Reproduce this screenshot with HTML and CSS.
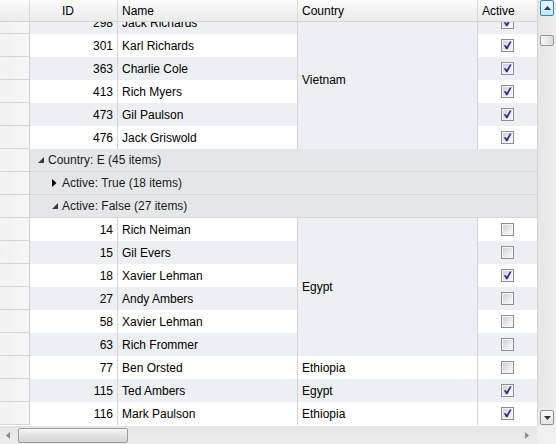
FILE: index.html
```html
<!DOCTYPE html>
<html lang="en">
<head>
  <meta charset="UTF-8" />
  <title>Grouped grid</title>
  <link rel="stylesheet" href="styles.css">
</head>
<body>

  <div class="grid-view">
    <div class="view">
      <div class="head">
        <div class="hcell"></div>
        <div class="hcell h-id">ID</div>
        <div class="hcell">Name</div>
        <div class="hcell">Country</div>
        <div class="hcell">Active</div>
      </div>
      <div class="body">
        <div class="rows" id="rows"></div>
      </div>
    </div>

    <div class="vscroll">
      <div class="sbtn up">
        <svg width="7" height="4" viewBox="0 0 7 4"><path d="M0 4L3.5 0L7 4Z" fill="#2d4255"/></svg>
      </div>
      <div class="vthumb"></div>
      <div class="sbtn down">
        <svg width="7" height="4" viewBox="0 0 7 4"><path d="M0 0L3.5 4L7 0Z" fill="#333"/></svg>
      </div>
    </div>

    <div class="hscroll">
      <svg width="4" height="7" viewBox="0 0 4 7"><path d="M4 0L0 3.5L4 7Z" fill="#8a8a8a"/></svg>
      <div class="hthumb"></div>
      <svg class="right" width="4" height="7" viewBox="0 0 4 7"><path d="M0 0L4 3.5L0 7Z" fill="#8a8a8a"/></svg>
    </div>
    <div class="corner"></div>
  </div>

  <script>
    // rows shown in the grid, top to bottom
    const items = [
      { id: 298, name: 'Jack Richards', country: 'Vietnam', span: 6, active: true, alt: true },
      { id: 301, name: 'Karl Richards', active: true },
      { id: 363, name: 'Charlie Cole', active: true, alt: true },
      { id: 413, name: 'Rich Myers', active: true },
      { id: 473, name: 'Gil Paulson', active: true, alt: true },
      { id: 476, name: 'Jack Griswold', active: true },
      { group: 'Country: E (45 items)', level: 1, open: true },
      { group: 'Active: True (18 items)', level: 2, open: false },
      { group: 'Active: False (27 items)', level: 2, open: true },
      { id: 14, name: 'Rich Neiman', country: 'Egypt', span: 6, active: false },
      { id: 15, name: 'Gil Evers', active: false, alt: true },
      { id: 18, name: 'Xavier Lehman', active: true },
      { id: 27, name: 'Andy Ambers', active: false, alt: true },
      { id: 58, name: 'Xavier Lehman', active: false },
      { id: 63, name: 'Rich Frommer', active: false, alt: true },
      { id: 77, name: 'Ben Orsted', country: 'Ethiopia', active: false },
      { id: 115, name: 'Ted Ambers', country: 'Egypt', active: true, alt: true },
      { id: 116, name: 'Mark Paulson', country: 'Ethiopia', active: true }
    ];

    const openGlyph = '<svg width="6" height="6" viewBox="0 0 6 6"><path d="M6 0V6H0Z" fill="#3c3c3c"/></svg>';
    const closedGlyph = '<svg width="5" height="8" viewBox="0 0 5 8"><path d="M0 0L4.5 4L0 8Z" fill="#000"/></svg>';
    const tick = '<svg width="9" height="9" viewBox="0 0 9 9"><path d="M0.8 4.2H2.8L3.8 5.6L6.9 0.4H8.6L4.5 8.2H3.1Z" fill="#2f3191"/></svg>';

    document.getElementById('rows').innerHTML = items.map(item => {
      if (item.group) {
        return `
          <div class="row">
            <div class="lead"></div>
            <div class="group lvl${item.level}">
              <span class="glyph">${item.open ? openGlyph : closedGlyph}</span>${item.group}
            </div>
          </div>`;
      }
      let country = '';
      if (item.span) {
        country = `<div class="cell country merged" style="grid-row: span ${item.span}">${item.country}</div>`;
      } else if (item.country) {
        country = `<div class="cell country">${item.country}</div>`;
      }
      return `
        <div class="row${item.alt ? ' alt' : ''}">
          <div class="lead"></div>
          <div class="cell id">${item.id}</div>
          <div class="cell name">${item.name}</div>
          ${country}
          <div class="cell active"><span class="check">${item.active ? tick : ''}</span></div>
        </div>`;
    }).join('');
  </script>
</body>
</html>
```

FILE: styles.css
```css
html, body {
  margin: 0;
  padding: 0;
  overflow: hidden;
}
body {
  font-family: 'Liberation Sans', Arial, sans-serif;
  font-size: 12px;
  color: #000;
  background-color: #fff;
}
.grid-view {
  display: grid;
  grid-template-columns: 537px 19px;
  grid-template-rows: 426px 18px;
  width: 556px;
  height: 444px;
}
.view {
  display: flex;
  flex-direction: column;
  min-height: 0;
}
.head, .rows {
  display: grid;
  grid-template-columns: 30px 88px 180px 180px 59px;
}
.head {
  height: 22px;
  border-bottom: 1px solid #d5d5d5;
  box-sizing: border-box;
  background: linear-gradient(#fcfcfc, #f1f1f1 60%, #ebebeb);
}
.hcell {
  padding: 1px 0 0 4px;
  line-height: 20px;
  border-right: 1px solid #dcdcdc;
}
.hcell:last-child {
  border-right: none;
}
.h-id {
  padding-left: 32px;
}
.body {
  flex: 1;
  overflow: hidden;
  background-color: #fff;
}
.rows {
  grid-auto-rows: 23px;
  margin-top: -11px;
}
.row {
  display: contents;
}
.lead {
  grid-column: 1;
  box-sizing: border-box;
  border-right: 1px solid #cfcfcf;
  border-bottom: 1px solid #d6d6d6;
  background: linear-gradient(to right, #f1f1f1, #f7f7f7);
}
.cell {
  display: flex;
  align-items: center;
  box-sizing: border-box;
  border-right: 1px solid #d4d4d4;
  white-space: nowrap;
}
.row.alt .cell, .merged {
  background-color: #eceff3;
}
.id {
  grid-column: 2;
  justify-content: flex-end;
  padding-right: 4px;
}
.name {
  grid-column: 3;
  padding-left: 4px;
}
.country {
  grid-column: 4;
  padding-left: 4px;
}
.active {
  grid-column: 5;
  justify-content: center;
  border-right: none;
}
.check {
  display: flex;
  align-items: center;
  justify-content: center;
  width: 13px;
  height: 13px;
  box-sizing: border-box;
  border: 1px solid #8e8f8f;
  box-shadow: inset 0 0 0 1px #f4f4f4;
  background: linear-gradient(135deg, #c9cdd3, #eef0f2 70%, #f8f8f8);
}
.group {
  grid-column: 2 / -1;
  display: flex;
  align-items: center;
  box-sizing: border-box;
  border-bottom: 1px solid #d4d8dc;
  background-color: #e4e7ea;
  color: #1b1b1b;
}
.lvl1 {
  padding-left: 8px;
}
.lvl2 {
  padding-left: 22px;
}
.glyph {
  display: inline-flex;
  align-items: center;
  width: 10px;
}
.vscroll {
  grid-row: 1;
  grid-column: 2;
  display: flex;
  flex-direction: column;
  padding: 0 2px 0 2px;
  border-left: 1px solid #d4d4d4;
  background: linear-gradient(to right, #e6e6e6, #eeeeee);
}
.sbtn {
  display: flex;
  align-items: center;
  justify-content: center;
  box-sizing: border-box;
  border-radius: 2px;
}
.sbtn.up {
  height: 16px;
  border: 1px solid #3c7fb1;
  background: linear-gradient(#eaf6fd, #d9f0fc 50%, #bee6fd);
}
.sbtn.down {
  height: 15px;
  margin-top: auto;
  margin-bottom: 1px;
  border: 1px solid #8e8f8f;
  background: linear-gradient(#f8f8f8, #e6e6e6);
}
.vthumb {
  height: 11px;
  margin-top: 19px;
  box-sizing: border-box;
  border: 1px solid #979797;
  border-radius: 2px;
  background: linear-gradient(to right, #f6f6f6, #dedede);
}
.hscroll {
  grid-row: 2;
  grid-column: 1;
  display: flex;
  align-items: center;
  padding: 0 6px;
  background: linear-gradient(#e4e4e4, #ededed);
}
.hthumb {
  width: 110px;
  height: 15px;
  margin-left: 8px;
  box-sizing: border-box;
  border: 1px solid #9b9b9b;
  border-radius: 2px;
  background: linear-gradient(#f6f6f6, #e2e2e2 50%, #d6d6d6);
}
.hscroll .right {
  margin-left: auto;
  margin-right: 2px;
}
.corner {
  grid-row: 2;
  grid-column: 2;
  background-color: #f0f0f0;
}
```
